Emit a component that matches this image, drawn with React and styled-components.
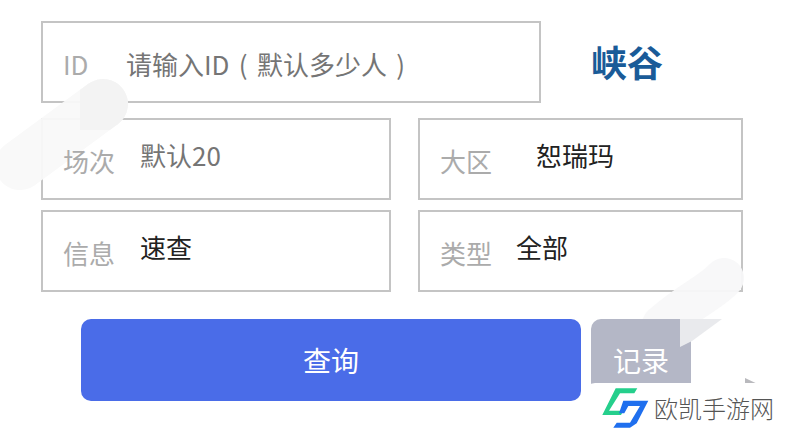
import React from "react";
import styled, { createGlobalStyle } from "styled-components";

const GlobalStyle = createGlobalStyle`
  html, body {
    margin: 0;
    padding: 0;
    background: #fff;
    overflow: hidden;
  }
  * {
    box-sizing: border-box;
  }
`;

const App = () => {
  return (
    <Page>
      <GlobalStyle />
      <Row>
        <Field $width={500}>
          <Label $width={63}>ID</Label>
          <Value $muted $top={4}>
            请输入ID ( 默认多少人 )
          </Value>
        </Field>
        <Title>峡谷</Title>
      </Row>
      <Row $top={15}>
        <Field $width={350}>
          <Label $width={77}>场次</Label>
          <Value $muted>默认20</Value>
        </Field>
        <Field $width={325}>
          <Label $width={96}>大区</Label>
          <Value>恕瑞玛</Value>
        </Field>
      </Row>
      <Row $top={10}>
        <Field $width={350}>
          <Label $width={77}>信息</Label>
          <Value>速查</Value>
        </Field>
        <Field $width={325}>
          <Label $width={76}>类型</Label>
          <Value>全部</Value>
        </Field>
      </Row>
      <Actions>
        <Button $width={500} $bg="#4a6ce8">
          查询
        </Button>
        <Button $width={100} $bg="#b4b7c6">
          记录
        </Button>
      </Actions>

      <Smudge viewBox="0 0 787 433">
        <defs>
          <clipPath id="band">
            <rect x="80" y="70" width="60" height="60" />
          </clipPath>
          <clipPath id="aboveButton">
            <rect x="600" y="240" width="187" height="79" />
          </clipPath>
        </defs>
        <path
          d="M103 104 L20 165"
          stroke="#f9f9f9"
          strokeWidth="50"
          strokeLinecap="round"
          opacity="0.96"
        />
        <path
          d="M103 104 L20 165"
          stroke="#f3f3f3"
          strokeWidth="50"
          strokeLinecap="round"
          clipPath="url(#band)"
        />
        <path
          d="M724 278 C712 292 690 300 662 325"
          stroke="#f8f8f9"
          strokeWidth="40"
          strokeLinecap="round"
          opacity="0.96"
          clipPath="url(#aboveButton)"
        />
        <path d="M680 319 L722 319 L692 341 L680 347 Z" fill="#e9eaed" />
        <path d="M745 378 L766 388 L745 388 Z" fill="#b9b9bd" />
      </Smudge>

      <Watermark>
        <svg width="57" height="50" viewBox="0 3 57 50">
          <path
            d="M20.7 8.3 L42.3 8.3 L39.3 13.3 L25 13.3 L14 30.7 L28.3 30.7 L26 35 L7.3 35 Z"
            fill="#25cf8c"
          />
          <path
            d="M28.3 20.7 L53.3 20.7 L41.7 43.3 L35 47.7 L18.3 47.7 L21.7 42.7 L35 42.7 L45 26 L33.3 26 L29.3 33.3 L24 33.3 Z"
            fill="#1f6fee"
          />
        </svg>
        <MarkText>欧凯手游网</MarkText>
      </Watermark>
    </Page>
  );
};

export default App;

const cjk = `"Noto Sans CJK SC", "Noto Sans", sans-serif`;

const Page = styled.div`
  position: relative;
  z-index: 0;
  width: 787px;
  height: 433px;
  padding: 21px 0 0 41px;
  overflow: hidden;
  font-family: ${cjk};
`;

const Row = styled.div`
  display: flex;
  gap: 27px;
  margin-top: ${(p) => p.$top || 0}px;
`;

const Field = styled.div`
  display: flex;
  align-items: center;
  width: ${(p) => p.$width}px;
  height: 82px;
  padding-left: 20px;
  border: 2px solid #c4c4c4;
  background: #fff;
`;

const Label = styled.span`
  position: relative;
  z-index: 1;
  flex: none;
  width: ${(p) => p.$width}px;
  padding-top: 4px;
  font-size: 26px;
  line-height: 36px;
  color: #ababab;
`;

const Value = styled.span`
  margin-top: ${(p) => (p.$top !== undefined ? p.$top : -8)}px;
  font-size: 26px;
  line-height: 36px;
  white-space: nowrap;
  word-spacing: 3.5px;
  color: ${(p) => (p.$muted ? "#757575" : "#222")};
`;

const Title = styled.div`
  display: flex;
  align-items: center;
  height: 80px;
  margin-left: 23px;
  font-size: 36px;
  font-weight: 700;
  color: #1a5b98;
`;

const Actions = styled.div`
  display: flex;
  gap: 10px;
  margin: 27px 0 0 40px;
`;

const Button = styled.div`
  display: flex;
  align-items: center;
  justify-content: center;
  width: ${(p) => p.$width}px;
  height: 82px;
  border-radius: 10px;
  background: ${(p) => p.$bg};
  font-size: 28px;
  color: #fff;
`;

const Smudge = styled.svg`
  position: absolute;
  left: 0;
  top: 0;
  width: 787px;
  height: 433px;
  pointer-events: none;
`;

const Watermark = styled.div`
  position: absolute;
  left: 585px;
  top: 383px;
  display: flex;
  align-items: center;
  gap: 2px;
  width: 202px;
  height: 50px;
  padding-left: 10px;
  background: #fff;
  border-top-left-radius: 10px;
`;

const MarkText = styled.span`
  font-size: 24px;
  font-weight: 300;
  line-height: 30px;
  color: #555;
  white-space: nowrap;
`;
